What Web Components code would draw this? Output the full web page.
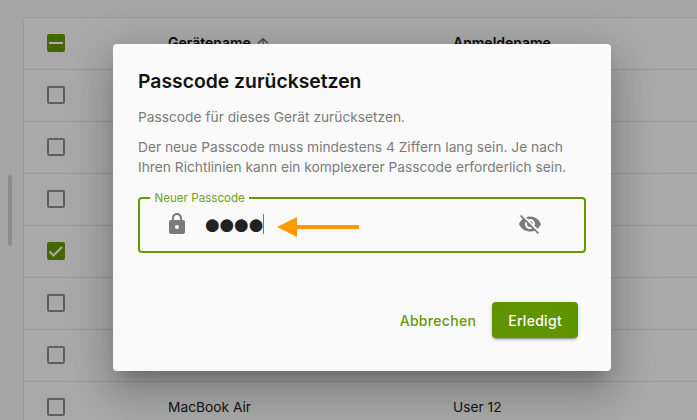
<!DOCTYPE html>
<html lang="de"><head><meta charset="utf-8"><title>Passcode zurücksetzen</title>
<style>
html,body{margin:0;height:420px;overflow:hidden;background:#f3f3f3;font-family:Inter,"Liberation Sans",sans-serif}
</style></head><body>
<dev-page>
  <dev-table>
    <dev-row head state="mixed"><b>Gerätename <dev-sort></dev-sort></b><b>Anmeldename</b></dev-row>
    <dev-row></dev-row>
    <dev-row></dev-row>
    <dev-row></dev-row>
    <dev-row state="on"></dev-row>
    <dev-row></dev-row>
    <dev-row></dev-row>
    <dev-row><span>MacBook Air</span><span>User 12</span></dev-row>
  </dev-table>
  <pass-dialog slot="overlay" heading="Passcode zurücksetzen">
    <p>Passcode für dieses Gerät zurücksetzen.</p>
    <p>Der neue Passcode muss mindestens 4 Ziffern lang sein. Je nach Ihren Richtlinien kann ein komplexerer Passcode erforderlich sein.</p>
    <pass-field slot="field" label="Neuer Passcode" value="●●●●"></pass-field>
    <dlg-button slot="actions">Abbrechen</dlg-button>
    <dlg-button slot="actions" primary>Erledigt</dlg-button>
  </pass-dialog>
</dev-page>
<script>
function def(name,html,init){
  customElements.define(name,class extends HTMLElement{
    constructor(){super();this.attachShadow({mode:'open'}).innerHTML=html;}
    connectedCallback(){init&&init(this,this.shadowRoot);}
  });
}
def('dev-page',`<style>
:host{display:flex;position:relative;width:697px;height:420px;overflow:hidden}
.gutter{flex:0 0 23px;box-sizing:border-box;padding:175px 0 0 8px}
.thumb{width:4px;height:71px;border-radius:2px;background:#cfcfcf}
.main{flex:1;min-width:0;padding-top:17px}
.backdrop{position:absolute;inset:0;background:rgba(0,0,0,.32)}
</style><div class="gutter"><div class="thumb"></div></div><div class="main"><slot></slot></div><div class="backdrop"></div><slot name="overlay"></slot>`);
def('dev-table',`<style>
:host{display:block;width:700px;background:#fafafa;border-top-left-radius:4px;border-top:1px solid #e4e4e4;border-left:1px solid #e4e4e4;box-sizing:border-box}
</style><slot></slot>`);
def('dev-row',`<style>
:host{display:grid;grid-template-columns:144px 285px 1fr;height:52px;box-sizing:border-box;border-bottom:1px solid #e0e0e0;padding-bottom:2px;align-items:center;font-size:13.75px;color:#222}
.c{padding:16px 0 0 23px;display:flex;align-self:start}
::slotted(b){font-weight:600;font-size:14px;color:#111;display:flex;align-items:center;gap:4px}
</style><div class="c"><dev-check></dev-check></div><slot></slot>`,(el,sr)=>{
  sr.querySelector('dev-check').setAttribute('state',el.getAttribute('state')||'off');
});
def('dev-sort',`<style>:host{display:inline-flex}svg{display:block}</style><svg width="16" height="16" viewBox="0 0 24 24" fill="#666"><path d="M4 12l1.41 1.41L11 7.83V20h2V7.83l5.58 5.59L20 12l-8-8-8 8z"/></svg>`);
def('dev-check',`<style>
:host{display:block;width:18px;height:18px;box-sizing:border-box;border:2px solid #8c8c8c;border-radius:2px}
:host([state=on]),:host([state=mixed]){background:#669900;border-color:#669900;position:relative}
svg{display:none;position:absolute;left:-2px;top:-2px}
:host([state=on]) .on,:host([state=mixed]) .mixed{display:block}
</style><svg class="on" width="18" height="18" viewBox="0 0 18 18" fill="none" stroke="#fff" stroke-width="2"><path d="M2.5 9.5l4 4 8.5-8.5"/></svg><svg class="mixed" width="18" height="18" viewBox="0 0 18 18" fill="none" stroke="#fff" stroke-width="2"><path d="M2 9h14"/></svg>`);
def('pass-dialog',`<style>
:host{position:absolute;left:113px;top:44px;width:498px;height:327px;box-sizing:border-box;background:#fafafa;border-radius:4px;padding:24px 25px 33px;display:flex;flex-direction:column;
box-shadow:0 11px 15px -7px rgba(0,0,0,.2),0 24px 38px 3px rgba(0,0,0,.14),0 9px 46px 8px rgba(0,0,0,.12)}
h2{margin:0 0 13px;font-size:19.35px;line-height:26px;font-weight:600;color:#111}
.body{font-size:13.75px;line-height:20px;color:#7a7a7a}
::slotted(p){margin:0 0 10px}
.f{margin-top:4px}
.act{margin-top:auto;display:flex;justify-content:flex-end;align-items:center;padding-right:8px}
</style><h2></h2><div class="body"><slot></slot></div><div class="f"><slot name="field"></slot></div><div class="act"><slot name="actions"></slot></div>`,(el,sr)=>{sr.querySelector('h2').textContent=el.getAttribute('heading');});
def('pass-field',`<style>
:host{display:block;position:relative}
fieldset{margin:0;padding:0;height:62px;box-sizing:border-box;border:2px solid #669900;border-radius:4px;display:flex;align-items:center}
legend{margin-left:10px;padding:0 4.5px;font-size:11.6px;line-height:14px;color:#6f9f20}
.row{display:flex;align-items:center;box-sizing:border-box;width:100%;height:46px;padding-left:25px;margin-bottom:8px}
.lock{flex:none;display:block}
.val{margin-left:16px;font:16.7px/20px "DejaVu Sans",sans-serif;color:#222;border-right:1px solid #669900;height:20px;white-space:nowrap}
.eye{flex:none;display:block;margin-left:auto;margin-right:42px}
.arrow{position:absolute;left:139px;top:24px;display:block}
</style><fieldset><legend></legend><div class="row">
<svg class="lock" width="24" height="24" viewBox="0 0 24 24" fill="#7b7b7b"><path d="M18 8h-1V6c0-2.76-2.24-5-5-5S7 3.24 7 6v2H6c-1.1 0-2 .9-2 2v10c0 1.1.9 2 2 2h12c1.1 0 2-.9 2-2V10c0-1.1-.9-2-2-2zm-6 9c-1.1 0-2-.9-2-2s.9-2 2-2 2 .9 2 2-.9 2-2 2zm3.1-9H8.9V6c0-1.71 1.39-3.1 3.1-3.1 1.71 0 3.1 1.39 3.1 3.1v2z"/></svg>
<span class="val"></span>
<svg class="eye" width="24" height="24" viewBox="0 0 24 24" fill="#7b7b7b"><path d="M12 7c2.76 0 5 2.24 5 5 0 .65-.13 1.26-.36 1.83l2.92 2.92c1.51-1.26 2.7-2.89 3.43-4.75-1.73-4.39-6-7.5-11-7.5-1.4 0-2.74.25-3.98.7l2.16 2.16C10.74 7.13 11.35 7 12 7zM2 4.27l2.28 2.28.46.46C3.08 8.3 1.78 10.02 1 12c1.73 4.39 6 7.5 11 7.5 1.55 0 3.03-.3 4.38-.84l.42.42L19.73 22 21 20.73 3.27 3 2 4.27zM7.53 9.8l1.55 1.55c-.05.21-.08.43-.08.65 0 1.66 1.34 3 3 3 .22 0 .44-.03.65-.08l1.55 1.55c-.67.33-1.41.53-2.2.53-2.76 0-5-2.24-5-5 0-.79.2-1.53.53-2.2zm4.31-.78l3.15 3.15.02-.16c0-1.66-1.34-3-3-3l-.17.01z"/></svg>
</div></fieldset>
<svg class="arrow" width="84" height="24" viewBox="0 0 84 24"><path d="M0 12L20 2v8h62v4H20v8z" fill="#ff9900"/></svg>`,(el,sr)=>{
  sr.querySelector('legend').textContent=el.getAttribute('label');
  sr.querySelector('.val').textContent=el.getAttribute('value');
});
def('dlg-button',`<style>
:host{display:inline-flex;align-items:center;justify-content:center;height:36px;padding:0 16px;border-radius:4px;font-size:14px;font-weight:500;color:#669900;letter-spacing:.3px}
:host([primary]){background:#5f9400;color:#fff;box-shadow:0 3px 1px -2px rgba(0,0,0,.2),0 2px 2px 0 rgba(0,0,0,.14),0 1px 5px 0 rgba(0,0,0,.12)}
</style><slot></slot>`);
</script>
</body></html>
